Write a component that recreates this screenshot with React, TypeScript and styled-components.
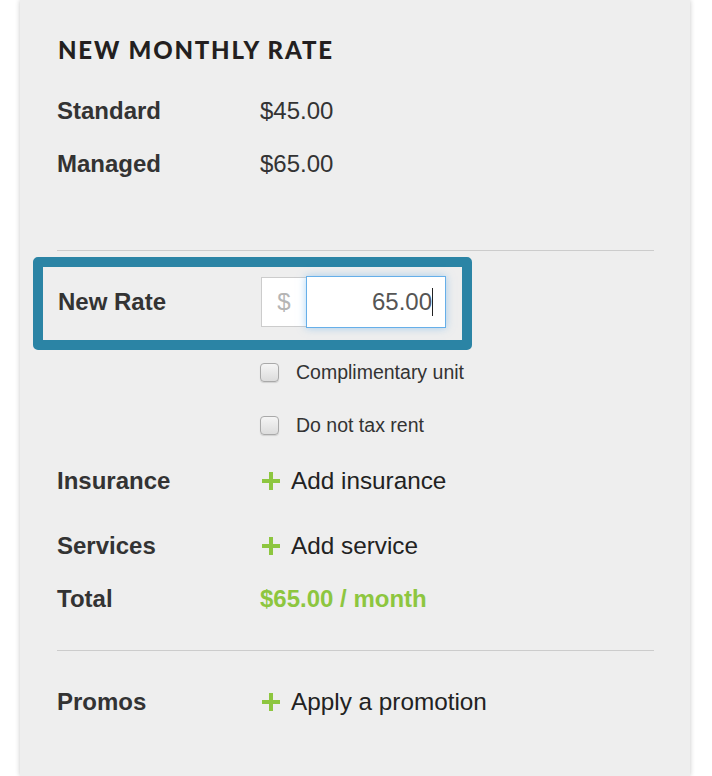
import styled, { createGlobalStyle } from "styled-components";

const GlobalStyle = createGlobalStyle`
  html, body {
    margin: 0;
    padding: 0;
    background: #ffffff;
  }
  body {
    font-family: "Liberation Sans", Arial, sans-serif;
    color: #333333;
  }
`;

const Panel = styled("div")({
  margin: "0 22px 0 20px",
  minHeight: "776px",
  boxSizing: "border-box",
  background: "#eeeeee",
  boxShadow: "0 0 5px rgba(0, 0, 0, 0.22)",
  padding: "36px 36px 40px 37px",
  display: "flex",
  flexDirection: "column",
});

const Heading = styled("h2")({
  margin: 0,
  height: "28px",
  lineHeight: "28px",
  fontFamily: '"Lato", "Open Sans", sans-serif',
  fontWeight: 900,
  fontSize: "24px",
  letterSpacing: "1.8px",
  color: "#231f20",
  paddingLeft: "1px",
});

const Row = styled("div")<{ $height?: number; $top?: number }>(
  ({ $height = 53, $top = 0 }) => ({
    display: "flex",
    alignItems: "center",
    height: `${$height}px`,
    marginTop: `${$top}px`,
  })
);

const Label = styled("div")({
  width: "203px",
  flexShrink: 0,
  fontWeight: 700,
  fontSize: "24px",
  color: "#333333",
});

const Value = styled("div")<{ $accent?: boolean }>(({ $accent = false }) => ({
  fontSize: "24px",
  color: "#333333",
  ...($accent && { color: "#8dc63f", fontWeight: 700 }),
}));

const Divider = styled("hr")<{ $top: number }>(({ $top }) => ({
  margin: `${$top}px 0 0 0`,
  border: 0,
  borderTop: "1px solid #cccccc",
  height: 0,
}));

const Highlight = styled("div")({
  display: "flex",
  alignItems: "center",
  alignSelf: "flex-start",
  marginTop: "6px",
  marginLeft: "-24px",
  height: "93px",
  boxSizing: "border-box",
  border: "10px solid #2b84a5",
  borderRadius: "5px",
  padding: "0 16px 3px 15px",
});

const InputGroup = styled("div")({
  display: "flex",
  height: "52px",
  boxSizing: "border-box",
});

const Addon = styled("div")({
  width: "45px",
  boxSizing: "border-box",
  border: "1px solid #cccccc",
  borderRight: 0,
  background: "#ffffff",
  display: "flex",
  alignItems: "center",
  justifyContent: "center",
  fontSize: "24px",
  color: "#b5b5b5",
  margin: "1px 0 1px 0",
});

const Field = styled("div")({
  width: "140px",
  boxSizing: "border-box",
  border: "1px solid #66afe9",
  background: "#ffffff",
  boxShadow: "0 0 8px rgba(102, 175, 233, 0.55)",
  display: "flex",
  alignItems: "center",
  justifyContent: "flex-end",
  paddingRight: "12px",
  fontSize: "24px",
  color: "#555555",
});

const Caret = styled("span")({
  display: "inline-block",
  width: "1px",
  height: "28px",
  background: "#222222",
});

const Spacer = styled("div")({
  width: "203px",
  flexShrink: 0,
});

const Check = styled("span")({
  width: "19px",
  height: "19px",
  boxSizing: "border-box",
  border: "1px solid #a9a9a9",
  borderRadius: "4px",
  background: "linear-gradient(#f5f5f5, #dcdcdc)",
  boxShadow: "0 1px 1px rgba(0, 0, 0, 0.12)",
  marginRight: "17px",
});

const CheckText = styled("span")({
  fontSize: "19.5px",
  color: "#333333",
});

const AddLink = styled("div")({
  display: "flex",
  alignItems: "center",
  gap: "11px",
  fontSize: "24.3px",
  color: "#222222",
  paddingLeft: "2px",
});

const Plus = () => (
  <svg width="18" height="18" viewBox="0 0 18 18">
    <rect x="7" y="0" width="4" height="18" fill="#8dc63f" />
    <rect x="0" y="7" width="18" height="4" fill="#8dc63f" />
  </svg>
);

const App = () => {
  return (
    <>
      <GlobalStyle />
      <Panel>
        <Heading>NEW MONTHLY RATE</Heading>
        <Row $top={20}>
          <Label>Standard</Label>
          <Value>$45.00</Value>
        </Row>
        <Row>
          <Label>Managed</Label>
          <Value>$65.00</Value>
        </Row>
        <Divider $top={60} />
        <Highlight>
          <Label>New Rate</Label>
          <InputGroup>
            <Addon>$</Addon>
            <Field>
              65.00
              <Caret />
            </Field>
          </InputGroup>
        </Highlight>
        <Row $height={44}>
          <Spacer />
          <Check />
          <CheckText>Complimentary unit</CheckText>
        </Row>
        <Row $height={44} $top={9}>
          <Spacer />
          <Check />
          <CheckText>Do not tax rent</CheckText>
        </Row>
        <Row $top={7}>
          <Label>Insurance</Label>
          <AddLink>
            <Plus />
            Add insurance
          </AddLink>
        </Row>
        <Row $top={12}>
          <Label>Services</Label>
          <AddLink>
            <Plus />
            Add service
          </AddLink>
        </Row>
        <Row>
          <Label>Total</Label>
          <Value $accent>$65.00 / month</Value>
        </Row>
        <Divider $top={25} />
        <Row $top={24}>
          <Label>Promos</Label>
          <AddLink>
            <Plus />
            Apply a promotion
          </AddLink>
        </Row>
      </Panel>
    </>
  );
};

export default App;
